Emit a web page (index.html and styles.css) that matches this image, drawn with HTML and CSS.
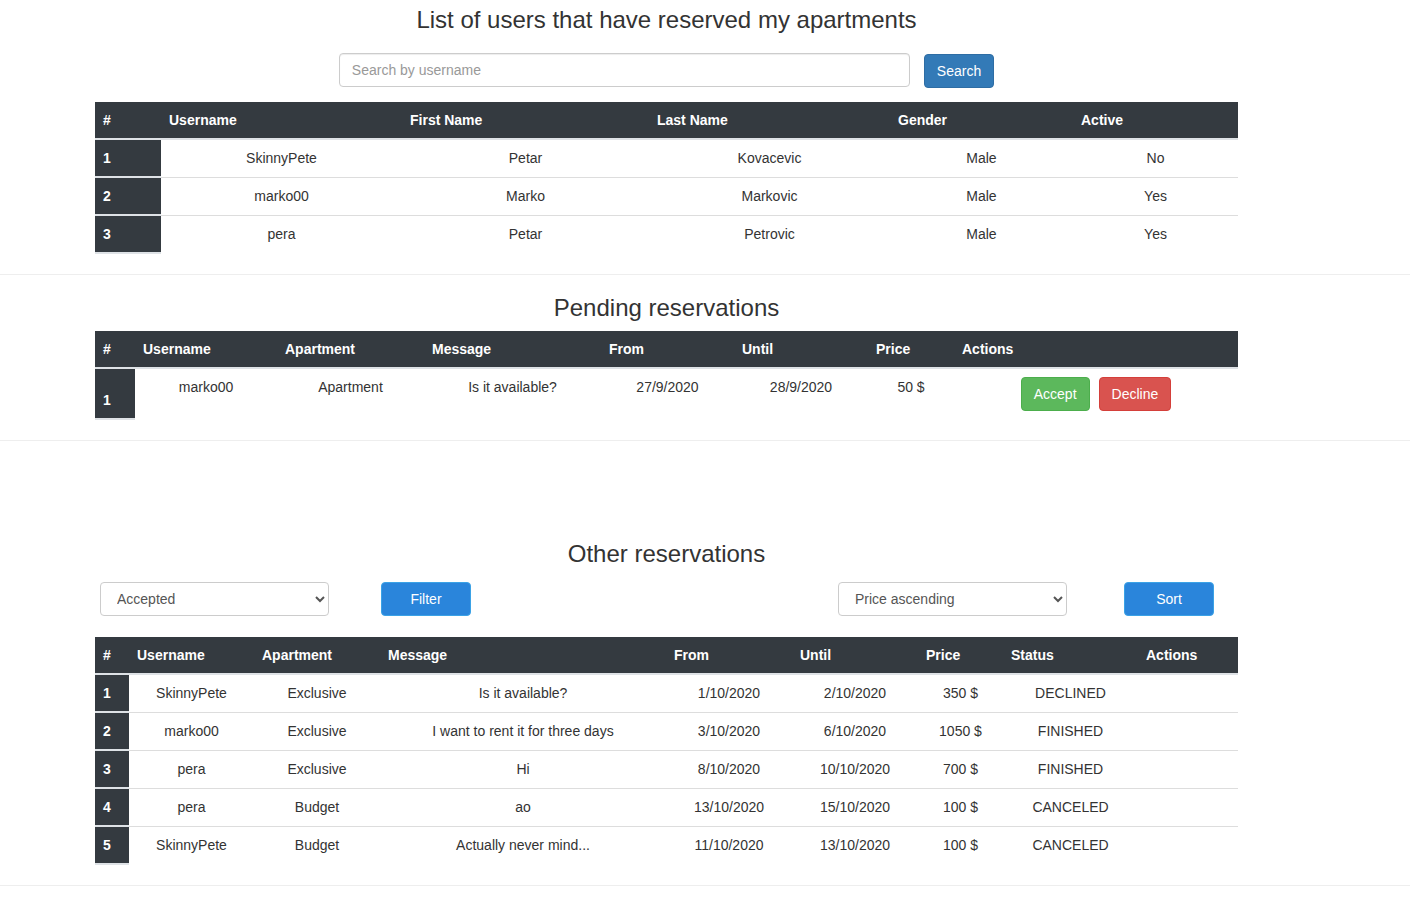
FILE: index.html
```html
<!DOCTYPE html>
<html lang="en">
<head>
<meta charset="utf-8">
<title>Reservations</title>
<link rel="stylesheet" href="styles.css">
</head>
<body>
<div class="section sec-users">
  <div class="page">
    <h2 class="title">List of users that have reserved my apartments</h2>
    <form class="search-row">
      <input class="search-input" type="text" placeholder="Search by username">
      <button type="button" class="btn btn-primary">Search</button>
    </form>
    <table class="table t-users">
      <colgroup>
        <col class="u1"><col class="u2"><col class="u3"><col class="u4"><col class="u5"><col class="u6">
      </colgroup>
      <thead>
        <tr><th>#</th><th>Username</th><th>First Name</th><th>Last Name</th><th>Gender</th><th>Active</th></tr>
      </thead>
      <tbody>
        <tr><th>1</th><td>SkinnyPete</td><td>Petar</td><td>Kovacevic</td><td>Male</td><td>No</td></tr>
        <tr><th>2</th><td>marko00</td><td>Marko</td><td>Markovic</td><td>Male</td><td>Yes</td></tr>
        <tr><th>3</th><td>pera</td><td>Petar</td><td>Petrovic</td><td>Male</td><td>Yes</td></tr>
      </tbody>
    </table>
  </div>
</div>
<hr class="sep">
<div class="section sec-pending">
  <div class="page">
    <h2 class="title">Pending reservations</h2>
    <table class="table t-pending">
      <colgroup>
        <col class="p1"><col class="p2"><col class="p3"><col class="p4"><col class="p5"><col class="p6"><col class="p7"><col class="p8">
      </colgroup>
      <thead>
        <tr><th>#</th><th>Username</th><th>Apartment</th><th>Message</th><th>From</th><th>Until</th><th>Price</th><th>Actions</th></tr>
      </thead>
      <tbody>
        <tr>
          <th>1</th><td>marko00</td><td>Apartment</td><td>Is it available?</td><td>27/9/2020</td><td>28/9/2020</td><td>50 $</td>
          <td><div class="actions"><button type="button" class="btn btn-success">Accept</button><button type="button" class="btn btn-danger">Decline</button></div></td>
        </tr>
      </tbody>
    </table>
  </div>
</div>
<hr class="sep">
<div class="section sec-other">
  <div class="page">
    <h2 class="title title-other">Other reservations</h2>
    <div class="controls">
      <select class="select sel-filter">
        <option>Accepted</option>
        <option>Declined</option>
        <option>Finished</option>
        <option>Canceled</option>
      </select>
      <button type="button" class="btn btn-blue btn-filter">Filter</button>
      <select class="select sel-sort">
        <option>Price ascending</option>
        <option>Price descending</option>
      </select>
      <button type="button" class="btn btn-blue btn-sort">Sort</button>
    </div>
    <table class="table t-other">
      <colgroup>
        <col class="o1"><col class="o2"><col class="o3"><col class="o4"><col class="o5"><col class="o6"><col class="o7"><col class="o8"><col class="o9">
      </colgroup>
      <thead>
        <tr><th>#</th><th>Username</th><th>Apartment</th><th>Message</th><th>From</th><th>Until</th><th>Price</th><th>Status</th><th>Actions</th></tr>
      </thead>
      <tbody>
        <tr><th>1</th><td>SkinnyPete</td><td>Exclusive</td><td>Is it available?</td><td>1/10/2020</td><td>2/10/2020</td><td>350 $</td><td>DECLINED</td><td></td></tr>
        <tr><th>2</th><td>marko00</td><td>Exclusive</td><td>I want to rent it for three days</td><td>3/10/2020</td><td>6/10/2020</td><td>1050 $</td><td>FINISHED</td><td></td></tr>
        <tr><th>3</th><td>pera</td><td>Exclusive</td><td>Hi</td><td>8/10/2020</td><td>10/10/2020</td><td>700 $</td><td>FINISHED</td><td></td></tr>
        <tr><th>4</th><td>pera</td><td>Budget</td><td>ao</td><td>13/10/2020</td><td>15/10/2020</td><td>100 $</td><td>CANCELED</td><td></td></tr>
        <tr><th>5</th><td>SkinnyPete</td><td>Budget</td><td>Actually never mind...</td><td>11/10/2020</td><td>13/10/2020</td><td>100 $</td><td>CANCELED</td><td></td></tr>
      </tbody>
    </table>
  </div>
</div>
<hr class="sep">
</body>
</html>
```
FILE: styles.css
```css
html, body {
  margin: 0;
  padding: 0;
  background: #fff;
}
body {
  font-family: "Liberation Sans", Arial, Helvetica, sans-serif;
  font-size: 14px;
  line-height: 20px;
  color: #333;
}
.page {
  width: 1143px;
  margin-left: 95px;
}
.title {
  margin: 0;
  font-size: 24px;
  font-weight: 400;
  line-height: 28px;
  text-align: center;
  color: #333;
}
.sec-users { padding-top: 6px; }
.sec-pending { padding-top: 19px; }
.sec-other { padding-top: 99px; }

.sep {
  margin: 0;
  border: 0;
  border-top: 1px solid #eee;
  height: 0;
}
.sec-users .table { margin-bottom: 20px; }
.sec-pending .table { margin-bottom: 20px; }
.sec-other .table { margin-bottom: 20px; }

/* search */
.search-row {
  display: flex;
  justify-content: center;
  align-items: flex-start;
  gap: 14px;
  margin: 19px 0 0;
  height: 35px;
}
.search-input {
  box-sizing: border-box;
  width: 571px;
  height: 34px;
  padding: 6px 12px;
  font-family: inherit;
  font-size: 14px;
  color: #555;
  border: 1px solid #ccc;
  border-radius: 4px;
  box-shadow: inset 0 1px 1px rgba(0,0,0,.075);
  outline: none;
}
.search-input::placeholder { color: #999; }
.search-row .btn { margin-top: 1px; }

/* buttons */
.btn {
  box-sizing: border-box;
  height: 34px;
  padding: 6px 12px;
  font-family: inherit;
  font-size: 14px;
  line-height: 20px;
  border: 1px solid transparent;
  border-radius: 4px;
  color: #fff;
  cursor: pointer;
}
.btn-primary { background: #337ab7; border-color: #2e6da4; }
.btn-success { background: #5cb85c; border-color: #4cae4c; }
.btn-danger { background: #d9534f; border-color: #d43f3a; }
.btn-blue { background: #2a85db; border-color: #3ba2e6; width: 90px; }

.actions {
  display: flex;
  justify-content: center;
  gap: 9px;
}

/* controls */
.controls {
  display: flex;
  align-items: center;
  margin-top: 14px;
  height: 34px;
  padding-left: 5px;
}
.select {
  box-sizing: border-box;
  width: 229px;
  height: 34px;
  padding: 6px 12px;
  font-family: inherit;
  font-size: 14px;
  color: #555;
  background: #fff;
  border: 1px solid #ccc;
  border-radius: 4px;
}
.btn-filter { margin-left: 52px; }
.sel-sort { margin-left: 367px; }
.btn-sort { margin-left: 57px; }

/* tables */
.table {
  width: 1143px;
  table-layout: fixed;
  border-collapse: separate;
  border-spacing: 0;
  margin-top: 14px;
}
.t-pending { margin-top: 9px; }
.t-other { margin-top: 21px; }
.table thead th {
  background: #343a40;
  color: #fff;
  font-weight: 700;
  text-align: left;
  padding: 8px;
  line-height: 20px;
  border-bottom: 2px solid #dee2e6;
  vertical-align: bottom;
}
.table tbody th {
  background: #343a40;
  color: #fff;
  font-weight: 700;
  text-align: left;
  padding: 8px;
  line-height: 20px;
  border-bottom: 2px solid #dee2e6;
  vertical-align: bottom;
}
.table tbody td {
  padding: 8px;
  line-height: 20px;
  text-align: center;
  vertical-align: top;
}
.t-pending tbody td { padding-bottom: 9px; }
.table tbody tr:not(:last-child) td {
  border-bottom: 1px solid #ddd;
}

.u1 { width: 66px; }
.u2 { width: 241px; }
.u3 { width: 247px; }
.u4 { width: 241px; }
.u5 { width: 183px; }
.u6 { width: 165px; }

.p1 { width: 40px; }
.p2 { width: 142px; }
.p3 { width: 147px; }
.p4 { width: 177px; }
.p5 { width: 133px; }
.p6 { width: 134px; }
.p7 { width: 86px; }
.p8 { width: 284px; }

.o1 { width: 34px; }
.o2 { width: 125px; }
.o3 { width: 126px; }
.o4 { width: 286px; }
.o5 { width: 126px; }
.o6 { width: 126px; }
.o7 { width: 85px; }
.o8 { width: 135px; }
.o9 { width: 100px; }
```
